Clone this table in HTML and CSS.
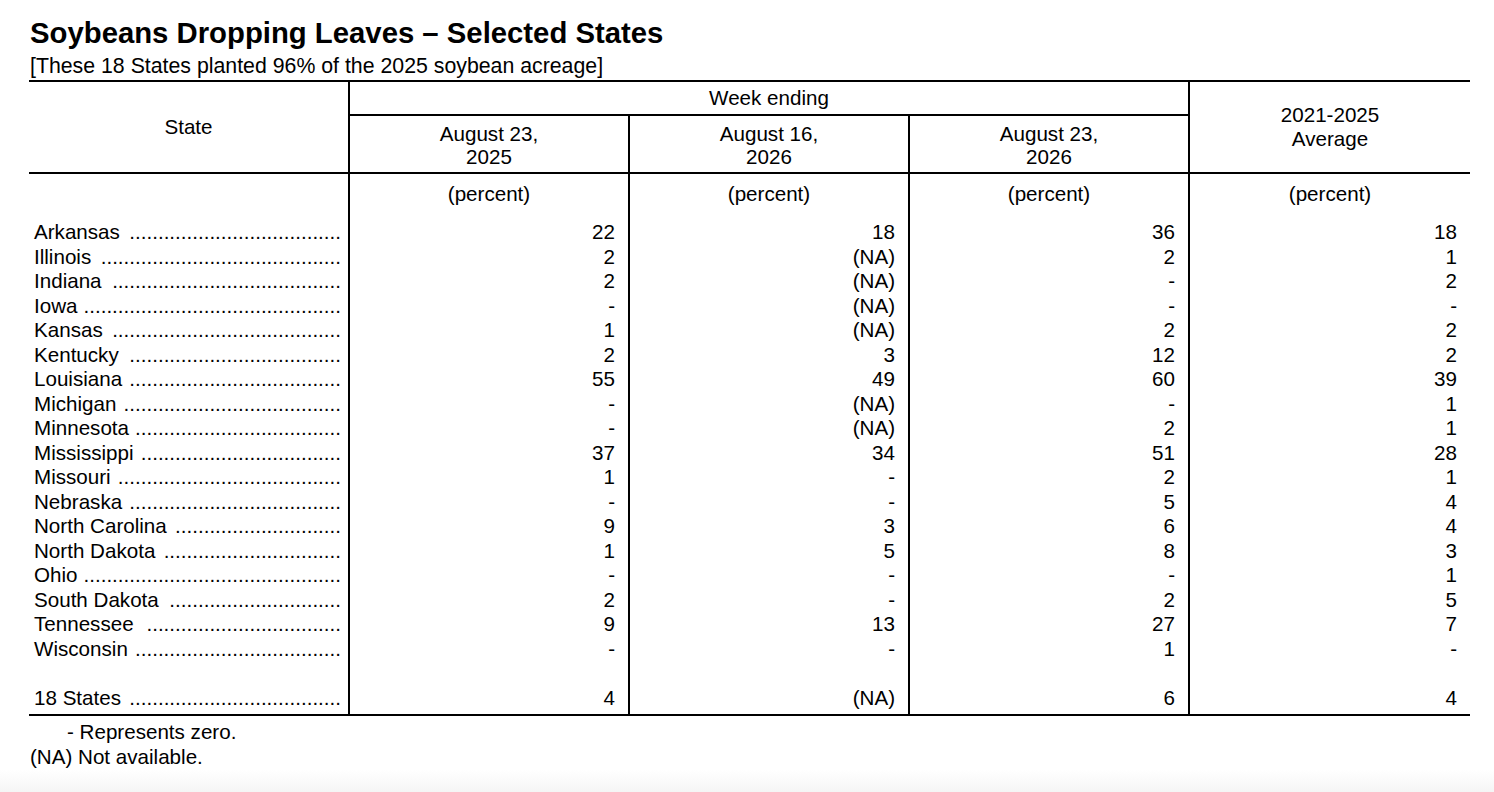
FILE: index.html
```html
<!DOCTYPE html>
<html lang="en">
<head>
<meta charset="utf-8">
<title>Soybeans Dropping Leaves – Selected States</title>
<link rel="stylesheet" href="styles.css">
</head>
<body>
<div class="page">
  <h1 class="title">Soybeans Dropping Leaves – Selected States</h1>
  <p class="subtitle">[These 18 States planted 96% of the 2025 soybean acreage]</p>
  <table class="report">
    <colgroup>
      <col class="c-state">
      <col class="c-num">
      <col class="c-num">
      <col class="c-num">
      <col class="c-last">
    </colgroup>
    <thead>
      <tr class="h1">
        <th rowspan="2" class="vr">State</th>
        <th colspan="3" class="vr week">Week ending</th>
        <th rowspan="2">2021-2025<br>Average</th>
      </tr>
      <tr class="h2">
        <th class="vr">August 23,<br>2025</th>
        <th class="vr">August 16,<br>2026</th>
        <th class="vr">August 23,<br>2026</th>
      </tr>
    </thead>
    <tbody>
      <tr class="unit">
        <td class="vr"></td>
        <td class="vr center">(percent)</td>
        <td class="vr center">(percent)</td>
        <td class="vr center">(percent)</td>
        <td class="center">(percent)</td>
      </tr>
      <tr><td class="vr st"><div class="lead"><span class="name">Arkansas</span><span class="dots">.....................................</span></div></td><td class="vr num">22</td><td class="vr num">18</td><td class="vr num">36</td><td class="num">18</td></tr>
      <tr><td class="vr st"><div class="lead"><span class="name">Illinois</span><span class="dots">..........................................</span></div></td><td class="vr num">2</td><td class="vr num">(NA)</td><td class="vr num">2</td><td class="num">1</td></tr>
      <tr><td class="vr st"><div class="lead"><span class="name">Indiana</span><span class="dots">........................................</span></div></td><td class="vr num">2</td><td class="vr num">(NA)</td><td class="vr num">-</td><td class="num">2</td></tr>
      <tr><td class="vr st"><div class="lead"><span class="name">Iowa</span><span class="dots">.............................................</span></div></td><td class="vr num">-</td><td class="vr num">(NA)</td><td class="vr num">-</td><td class="num">-</td></tr>
      <tr><td class="vr st"><div class="lead"><span class="name">Kansas</span><span class="dots">........................................</span></div></td><td class="vr num">1</td><td class="vr num">(NA)</td><td class="vr num">2</td><td class="num">2</td></tr>
      <tr><td class="vr st"><div class="lead"><span class="name">Kentucky</span><span class="dots">.....................................</span></div></td><td class="vr num">2</td><td class="vr num">3</td><td class="vr num">12</td><td class="num">2</td></tr>
      <tr><td class="vr st"><div class="lead"><span class="name">Louisiana</span><span class="dots">.....................................</span></div></td><td class="vr num">55</td><td class="vr num">49</td><td class="vr num">60</td><td class="num">39</td></tr>
      <tr><td class="vr st"><div class="lead"><span class="name">Michigan</span><span class="dots">......................................</span></div></td><td class="vr num">-</td><td class="vr num">(NA)</td><td class="vr num">-</td><td class="num">1</td></tr>
      <tr><td class="vr st"><div class="lead"><span class="name">Minnesota</span><span class="dots">....................................</span></div></td><td class="vr num">-</td><td class="vr num">(NA)</td><td class="vr num">2</td><td class="num">1</td></tr>
      <tr><td class="vr st"><div class="lead"><span class="name">Mississippi</span><span class="dots">...................................</span></div></td><td class="vr num">37</td><td class="vr num">34</td><td class="vr num">51</td><td class="num">28</td></tr>
      <tr><td class="vr st"><div class="lead"><span class="name">Missouri</span><span class="dots">.......................................</span></div></td><td class="vr num">1</td><td class="vr num">-</td><td class="vr num">2</td><td class="num">1</td></tr>
      <tr><td class="vr st"><div class="lead"><span class="name">Nebraska</span><span class="dots">.....................................</span></div></td><td class="vr num">-</td><td class="vr num">-</td><td class="vr num">5</td><td class="num">4</td></tr>
      <tr><td class="vr st"><div class="lead"><span class="name">North Carolina</span><span class="dots">.............................</span></div></td><td class="vr num">9</td><td class="vr num">3</td><td class="vr num">6</td><td class="num">4</td></tr>
      <tr><td class="vr st"><div class="lead"><span class="name">North Dakota</span><span class="dots">...............................</span></div></td><td class="vr num">1</td><td class="vr num">5</td><td class="vr num">8</td><td class="num">3</td></tr>
      <tr><td class="vr st"><div class="lead"><span class="name">Ohio</span><span class="dots">.............................................</span></div></td><td class="vr num">-</td><td class="vr num">-</td><td class="vr num">-</td><td class="num">1</td></tr>
      <tr><td class="vr st"><div class="lead"><span class="name">South Dakota</span><span class="dots">..............................</span></div></td><td class="vr num">2</td><td class="vr num">-</td><td class="vr num">2</td><td class="num">5</td></tr>
      <tr><td class="vr st"><div class="lead"><span class="name">Tennessee</span><span class="dots">..................................</span></div></td><td class="vr num">9</td><td class="vr num">13</td><td class="vr num">27</td><td class="num">7</td></tr>
      <tr><td class="vr st"><div class="lead"><span class="name">Wisconsin</span><span class="dots">....................................</span></div></td><td class="vr num">-</td><td class="vr num">-</td><td class="vr num">1</td><td class="num">-</td></tr>
      <tr class="blank"><td class="vr"></td><td class="vr"></td><td class="vr"></td><td class="vr"></td><td></td></tr>
      <tr class="total"><td class="vr st"><div class="lead"><span class="name">18 States</span><span class="dots">.....................................</span></div></td><td class="vr num">4</td><td class="vr num">(NA)</td><td class="vr num">6</td><td class="num">4</td></tr>
    </tbody>
  </table>
  <div class="notes">
    <p class="note indent">- Represents zero.</p>
    <p class="note">(NA) Not available.</p>
  </div>
</div>
</body>
</html>
```

FILE: styles.css
```css
html {
  background: linear-gradient(to bottom, #ffffff 0, #ffffff 770px, #f5f5f5 792px);
  min-height: 100%;
}
body {
  margin: 0;
  font-family: "Liberation Sans", Arial, sans-serif;
  color: #000;
}
.page {
  padding: 14px 0 0 29px;
  width: 1441px;
}
.title {
  margin: 0 0 0 1px;
  font-size: 29.3px;
  font-weight: bold;
  line-height: 38px;
  height: 38px;
}
.subtitle {
  margin: 0 0 0 1px;
  font-size: 21.3px;
  line-height: 28px;
  height: 28px;
}
.report {
  width: 1441px;
  table-layout: fixed;
  border-collapse: separate;
  border-spacing: 0;
  border-top: 2px solid #000;
  border-bottom: 2px solid #000;
  font-size: 20.6px;
  line-height: 24.5px;
}
.c-state { width: 321px; }
.c-num { width: 280px; }
.c-last { width: 280px; }
.report th, .report td {
  padding: 0;
  box-sizing: border-box;
  font-weight: normal;
  text-align: center;
  vertical-align: middle;
}
.report .vr {
  border-right: 2px solid #000;
}
.h1 th {
  height: 34px;
}
.h1 th.week {
  border-bottom: 2px solid #000;
  height: 34px;
  line-height: 32px;
}
.h2 th {
  height: 58px;
  line-height: 23px;
  padding-top: 1px;
}
thead tr.h2 th, thead tr.h1 th[rowspan] {
  border-bottom: 2px solid #000;
}
.unit td {
  height: 46px;
  padding-top: 8px;
  vertical-align: top;
}
.report td.num {
  text-align: right;
  padding-right: 13px;
}
.report td.st {
  text-align: left;
  padding: 0 7px 0 5px;
}
.lead {
  display: flex;
  justify-content: space-between;
  white-space: nowrap;
}
.lead .name, .lead .dots {
  flex: none;
}
.blank td {
  height: 24.5px;
}
.total td {
  padding-bottom: 4px;
}
.report tr.total td.st {
  padding-bottom: 4px;
}
.notes {
  padding-top: 3px;
}
.note {
  margin: 0 0 0 1px;
  font-size: 20.6px;
  line-height: 25px;
}
.note.indent {
  padding-left: 37px;
}
```
